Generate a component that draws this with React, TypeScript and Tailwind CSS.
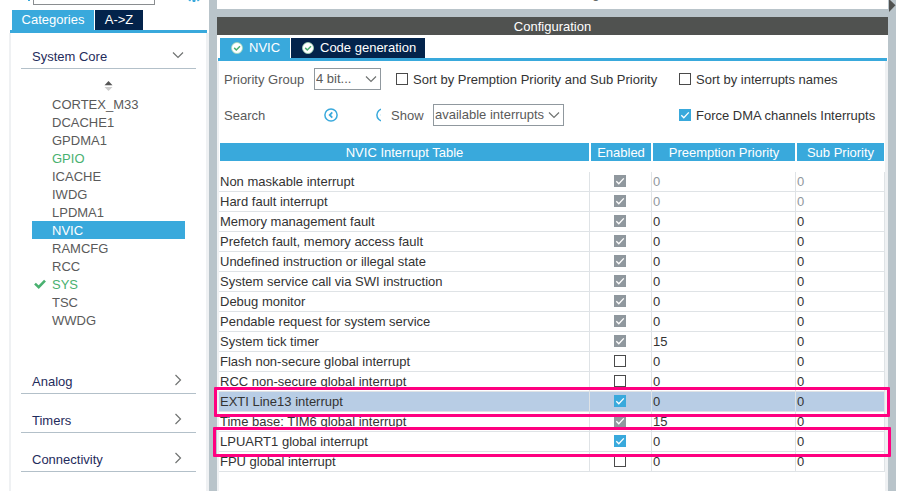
import { useState } from 'react';
import type { ReactNode } from 'react';
import clsx from 'clsx';

type Interrupt = {
  name: string;
  enabled: boolean;
  locked?: boolean;
  fixedPriority?: boolean;
  preemption: number;
  sub: number;
  mark?: 'narrow' | 'wide';
};

const peripherals = [
  { name: 'CORTEX_M33' },
  { name: 'DCACHE1' },
  { name: 'GPDMA1' },
  { name: 'GPIO', active: true },
  { name: 'ICACHE' },
  { name: 'IWDG' },
  { name: 'LPDMA1' },
  { name: 'NVIC' },
  { name: 'RAMCFG' },
  { name: 'RCC' },
  { name: 'SYS', active: true, checked: true },
  { name: 'TSC' },
  { name: 'WWDG' },
];

const initialInterrupts: Interrupt[] = [
  { name: 'Non maskable interrupt', enabled: true, locked: true, fixedPriority: true, preemption: 0, sub: 0 },
  { name: 'Hard fault interrupt', enabled: true, locked: true, fixedPriority: true, preemption: 0, sub: 0 },
  { name: 'Memory management fault', enabled: true, locked: true, preemption: 0, sub: 0 },
  { name: 'Prefetch fault, memory access fault', enabled: true, locked: true, preemption: 0, sub: 0 },
  { name: 'Undefined instruction or illegal state', enabled: true, locked: true, preemption: 0, sub: 0 },
  { name: 'System service call via SWI instruction', enabled: true, locked: true, preemption: 0, sub: 0 },
  { name: 'Debug monitor', enabled: true, locked: true, preemption: 0, sub: 0 },
  { name: 'Pendable request for system service', enabled: true, locked: true, preemption: 0, sub: 0 },
  { name: 'System tick timer', enabled: true, locked: true, preemption: 15, sub: 0 },
  { name: 'Flash non-secure global interrupt', enabled: false, preemption: 0, sub: 0 },
  { name: 'RCC non-secure global interrupt', enabled: false, preemption: 0, sub: 0 },
  { name: 'EXTI Line13 interrupt', enabled: true, preemption: 0, sub: 0, mark: 'narrow' },
  { name: 'Time base: TIM6 global interrupt', enabled: true, locked: true, preemption: 15, sub: 0 },
  { name: 'LPUART1 global interrupt', enabled: true, preemption: 0, sub: 0, mark: 'wide' },
  { name: 'FPU global interrupt', enabled: false, preemption: 0, sub: 0 },
];

function Chevron({ className }: { className?: string }) {
  return (
    <svg viewBox="0 0 12 8" className={clsx('h-2 w-3', className)} fill="none" stroke="#707372" strokeWidth="1.2">
      <path d="M1 1.5 6 6.5 11 1.5" />
    </svg>
  );
}

function TabCheck() {
  return (
    <svg viewBox="0 0 12 12" className="h-3 w-3" fill="none">
      <circle cx="6" cy="6" r="5.5" fill="#fff" stroke="#a5d8b5" strokeWidth="0.8" />
      <path d="M3.2 5.9 5.3 8 9 4.3" stroke="#49b170" strokeWidth="1.5" />
    </svg>
  );
}

function StepIcon() {
  return (
    <svg viewBox="0 0 14 14" className="h-3.5 w-3.5 shrink-0" fill="none" stroke="#39a9dc" strokeWidth="1.5">
      <circle cx="7" cy="7" r="6.1" />
      <path d="M8.3 4.4 5.7 7l2.6 2.6" strokeWidth="1.8" />
    </svg>
  );
}

type CheckboxProps = {
  id: string;
  checked: boolean;
  disabled?: boolean;
  label?: string;
  onChange: () => void;
};

function Checkbox({ id, checked, disabled, label, onChange }: CheckboxProps) {
  return (
    <span className="relative block h-3 w-3">
      <input
        id={id}
        type="checkbox"
        checked={checked}
        disabled={disabled}
        aria-label={label}
        onChange={onChange}
        className="block h-3 w-3 appearance-none border border-[#4a4a4a] bg-white checked:border-[#39a9dc] checked:bg-[#39a9dc] checked:disabled:border-[#90989e] checked:disabled:bg-[#90989e]"
      />
      {checked && (
        <svg viewBox="0 0 12 12" className="pointer-events-none absolute inset-0 h-3 w-3" fill="none" stroke="#fff" strokeWidth="1.3">
          <path d="M2.3 6.2 4.8 8.7 9.8 3.4" />
        </svg>
      )}
    </span>
  );
}

function Option({ id, text }: { id: string; text: string }) {
  const [checked, setChecked] = useState(id === 'force-dma');
  return (
    <div className="flex items-center gap-[5px]">
      <Checkbox id={id} checked={checked} onChange={() => setChecked(!checked)} />
      <label htmlFor={id} className="pt-[2px] whitespace-nowrap">{text}</label>
    </div>
  );
}

function Select({ id, className, children }: { id: string; className: string; children: ReactNode }) {
  return (
    <div className={clsx('relative', className)}>
      <select id={id} className="block h-[22px] w-full appearance-none border border-[#90989e] bg-white pl-px text-[#5a5a5a]">
        {children}
      </select>
      <Chevron className="pointer-events-none absolute top-[7px] right-1" />
    </div>
  );
}

function Category({ title, open }: { title: string; open?: boolean }) {
  return (
    <button
      type="button"
      aria-expanded={!!open}
      className="flex h-[25px] w-full items-center justify-between border-b border-[#b3c0c9] pr-3 pl-[11px] text-[#1f2c5c]"
    >
      <span className="pt-[2px]">{title}</span>
      <Chevron className={clsx('-mt-[3px]', !open && '-rotate-90')} />
    </button>
  );
}

function Sidebar() {
  const [selected, setSelected] = useState('NVIC');

  return (
    <aside className="flex w-[209px] shrink-0 flex-col">
      <div className="flex h-[10px] items-start overflow-hidden pr-2 pl-7">
        <span className="h-px w-[2px] bg-[#39a9dc]" />
        <input aria-label="Search peripherals" className="-mt-4 ml-[3px] h-[21px] w-[122px] border border-[#8a8d90]" />
        <svg viewBox="0 0 14 14" className="-mt-3 ml-auto h-3.5 w-3.5" fill="none" stroke="#39a9dc">
          <circle cx="7" cy="7" r="4.5" strokeWidth="2" />
          <path d="M7 11v3M3.8 10.2 2 12.6M10.2 10.2l1.8 2.4" strokeWidth="2.6" />
        </svg>
      </div>
      <div className="ml-[10px] mr-[2px] flex gap-px border-b-[3px] border-[#39a9dc] pl-[2px] text-white">
        <button type="button" className="h-5 w-[82px] bg-[#39a9dc]">Categories</button>
        <button type="button" className="h-5 w-12 bg-[#03234b]">A-&gt;Z</button>
      </div>
      <div className="ml-[9px] flex-1 border-r-[3px] border-l-2 border-[#eff1f3] pt-[11px] pr-[10px] pl-[10px]">
        <Category title="System Core" open />
        <svg viewBox="0 0 10 10" className="mx-auto mt-3 h-[10px] w-[10px]">
          <path d="M4.5 0 8.5 4.3H.5Z" fill="#555" />
          <path d="M4.5 10 8.5 6H.5Z" fill="#ccc" />
        </svg>
        <ul className="mt-1 mr-[11px] ml-[11px]">
          {peripherals.map((p) => (
            <li key={p.name}>
              <button
                type="button"
                onClick={() => setSelected(p.name)}
                className={clsx(
                  'flex h-[18px] w-full items-center',
                  p.name === selected ? 'bg-[#39a9dc] text-white' : p.active ? 'text-[#49b170]' : 'text-[#5a5a5a]'
                )}
              >
                <span className="w-5 shrink-0 pl-[2px]">
                  {p.checked && (
                    <svg viewBox="0 0 12 10" className="h-[10px] w-3" fill="none" stroke="#49b170" strokeWidth="2.6">
                      <path d="M1 4.6 4.7 8.1 11 1.6" />
                    </svg>
                  )}
                </span>
                <span className="pt-[2px]">{p.name}</span>
              </button>
            </li>
          ))}
        </ul>
        <div className="mt-10 flex flex-col gap-[14px]">
          <Category title="Analog" />
          <Category title="Timers" />
          <Category title="Connectivity" />
        </div>
      </div>
    </aside>
  );
}

function InterruptTable() {
  const [rows, setRows] = useState(initialInterrupts);

  const toggle = (name: string) =>
    setRows(rows.map((r) => (r.name === name ? { ...r, enabled: !r.enabled } : r)));

  return (
    <table className="w-full table-fixed border-separate border-spacing-0">
      <colgroup>
        <col />
        <col className="w-[62px]" />
        <col className="w-36" />
        <col className="w-[89px]" />
      </colgroup>
      <thead>
        <tr>
          {['NVIC Interrupt Table', 'Enabled', 'Preemption Priority', 'Sub Priority'].map((title) => (
            <th key={title} className="px-px pt-0 pb-[11px] font-normal">
              <span className="block h-[18px] bg-[#39a9dc] leading-5 text-white">{title}</span>
            </th>
          ))}
        </tr>
      </thead>
      <tbody>
        {rows.map((row) => {
          const cell = clsx('h-5 border-r border-b border-[#dfe3e6] py-0', row.mark === 'narrow' && 'bg-[#b8cde5]');
          const priority = clsx(cell, 'pl-px', row.fixedPriority && 'text-[#90989e]');
          return (
            <tr key={row.name} className="relative">
              <td className={clsx(cell, 'pl-px')}>
                {row.name}
                {row.mark && (
                  <span
                    className={clsx(
                      'pointer-events-none absolute -inset-y-[5px] z-10 rounded-[1px] border-[3px] border-[#ff0080]',
                      row.mark === 'wide' ? '-inset-x-[6px]' : '-inset-x-[5px]'
                    )}
                  />
                )}
              </td>
              <td className={cell}>
                <div className="flex justify-center pr-px pb-px">
                  <Checkbox
                    id={row.name.replaceAll(' ', '-')}
                    label={`Enable ${row.name}`}
                    checked={row.enabled}
                    disabled={row.locked}
                    onChange={() => toggle(row.name)}
                  />
                </div>
              </td>
              <td className={priority}>{row.preemption}</td>
              <td className={priority}>{row.sub}</td>
            </tr>
          );
        })}
      </tbody>
    </table>
  );
}

export default function App() {
  return (
    <div className="flex min-h-screen bg-white font-['Liberation_Sans',Arial,sans-serif] text-[13px] leading-[18px] text-[#333333]">
      <Sidebar />
      <div className="w-2 shrink-0 bg-[#b9c4ca]" />
      <main className="flex min-w-0 flex-1 flex-col">
        <div className="flex h-[9px] items-end justify-center overflow-hidden pb-[6px] text-[#505250]">
          NVIC Mode and Configuration
        </div>
        <div className="h-2 bg-[#b9c4ca]" />
        <h1 className="h-[18px] bg-[#505250] text-center leading-5 text-white">Configuration</h1>
        <div className="mx-px mt-[3px] flex gap-px border-b-[3px] border-[#39a9dc] pl-[2px] text-white">
          <button type="button" className="flex h-5 w-[70px] items-center gap-[6px] bg-[#39a9dc] pl-[11px]">
            <TabCheck />
            NVIC
          </button>
          <button type="button" className="flex h-5 w-[134px] items-center gap-[6px] bg-[#03234b] pl-[11px]">
            <TabCheck />
            Code generation
          </button>
        </div>
        <section className="flex-1 border-r-[3px] border-l-2 border-[#eff1f3] pt-[7px]">
          <div className="mb-[17px] grid grid-cols-[455px_auto] gap-y-[14px] pl-[5px]">
            <div className="flex items-center">
              <label htmlFor="priority-group" className="w-[90px] pt-[2px] text-[#5a5a5a]">Priority Group</label>
              <Select id="priority-group" className="mr-[15px] w-[67px]">
                <option>4 bit...</option>
              </Select>
              <Option id="sort-priority" text="Sort by Premption Priority and Sub Priority" />
            </div>
            <Option id="sort-names" text="Sort by interrupts names" />
            <div className="flex items-center">
              <span className="w-[100px] pt-[2px] text-[#5a5a5a]">Search</span>
              <button type="button" aria-label="Previous match"><StepIcon /></button>
              <button type="button" aria-label="Next match" className="mr-[10px] ml-[38px] w-[5px] overflow-hidden">
                <StepIcon />
              </button>
              <label htmlFor="show" className="w-[42px] pt-[2px] text-[#5a5a5a]">Show</label>
              <Select id="show" className="w-[131px]">
                <option>available interrupts</option>
              </Select>
            </div>
            <Option id="force-dma" text="Force DMA channels Interrupts" />
          </div>
          <InterruptTable />
        </section>
      </main>
      <div className="w-2 shrink-0 bg-[#b9c4ca]">
        <svg viewBox="0 0 8 12" className="h-3 w-2">
          <path d="M1 0V12L7.5 5.3 2 0Z" fill="#505250" />
        </svg>
      </div>
      <div className="w-2 shrink-0" />
    </div>
  );
}
